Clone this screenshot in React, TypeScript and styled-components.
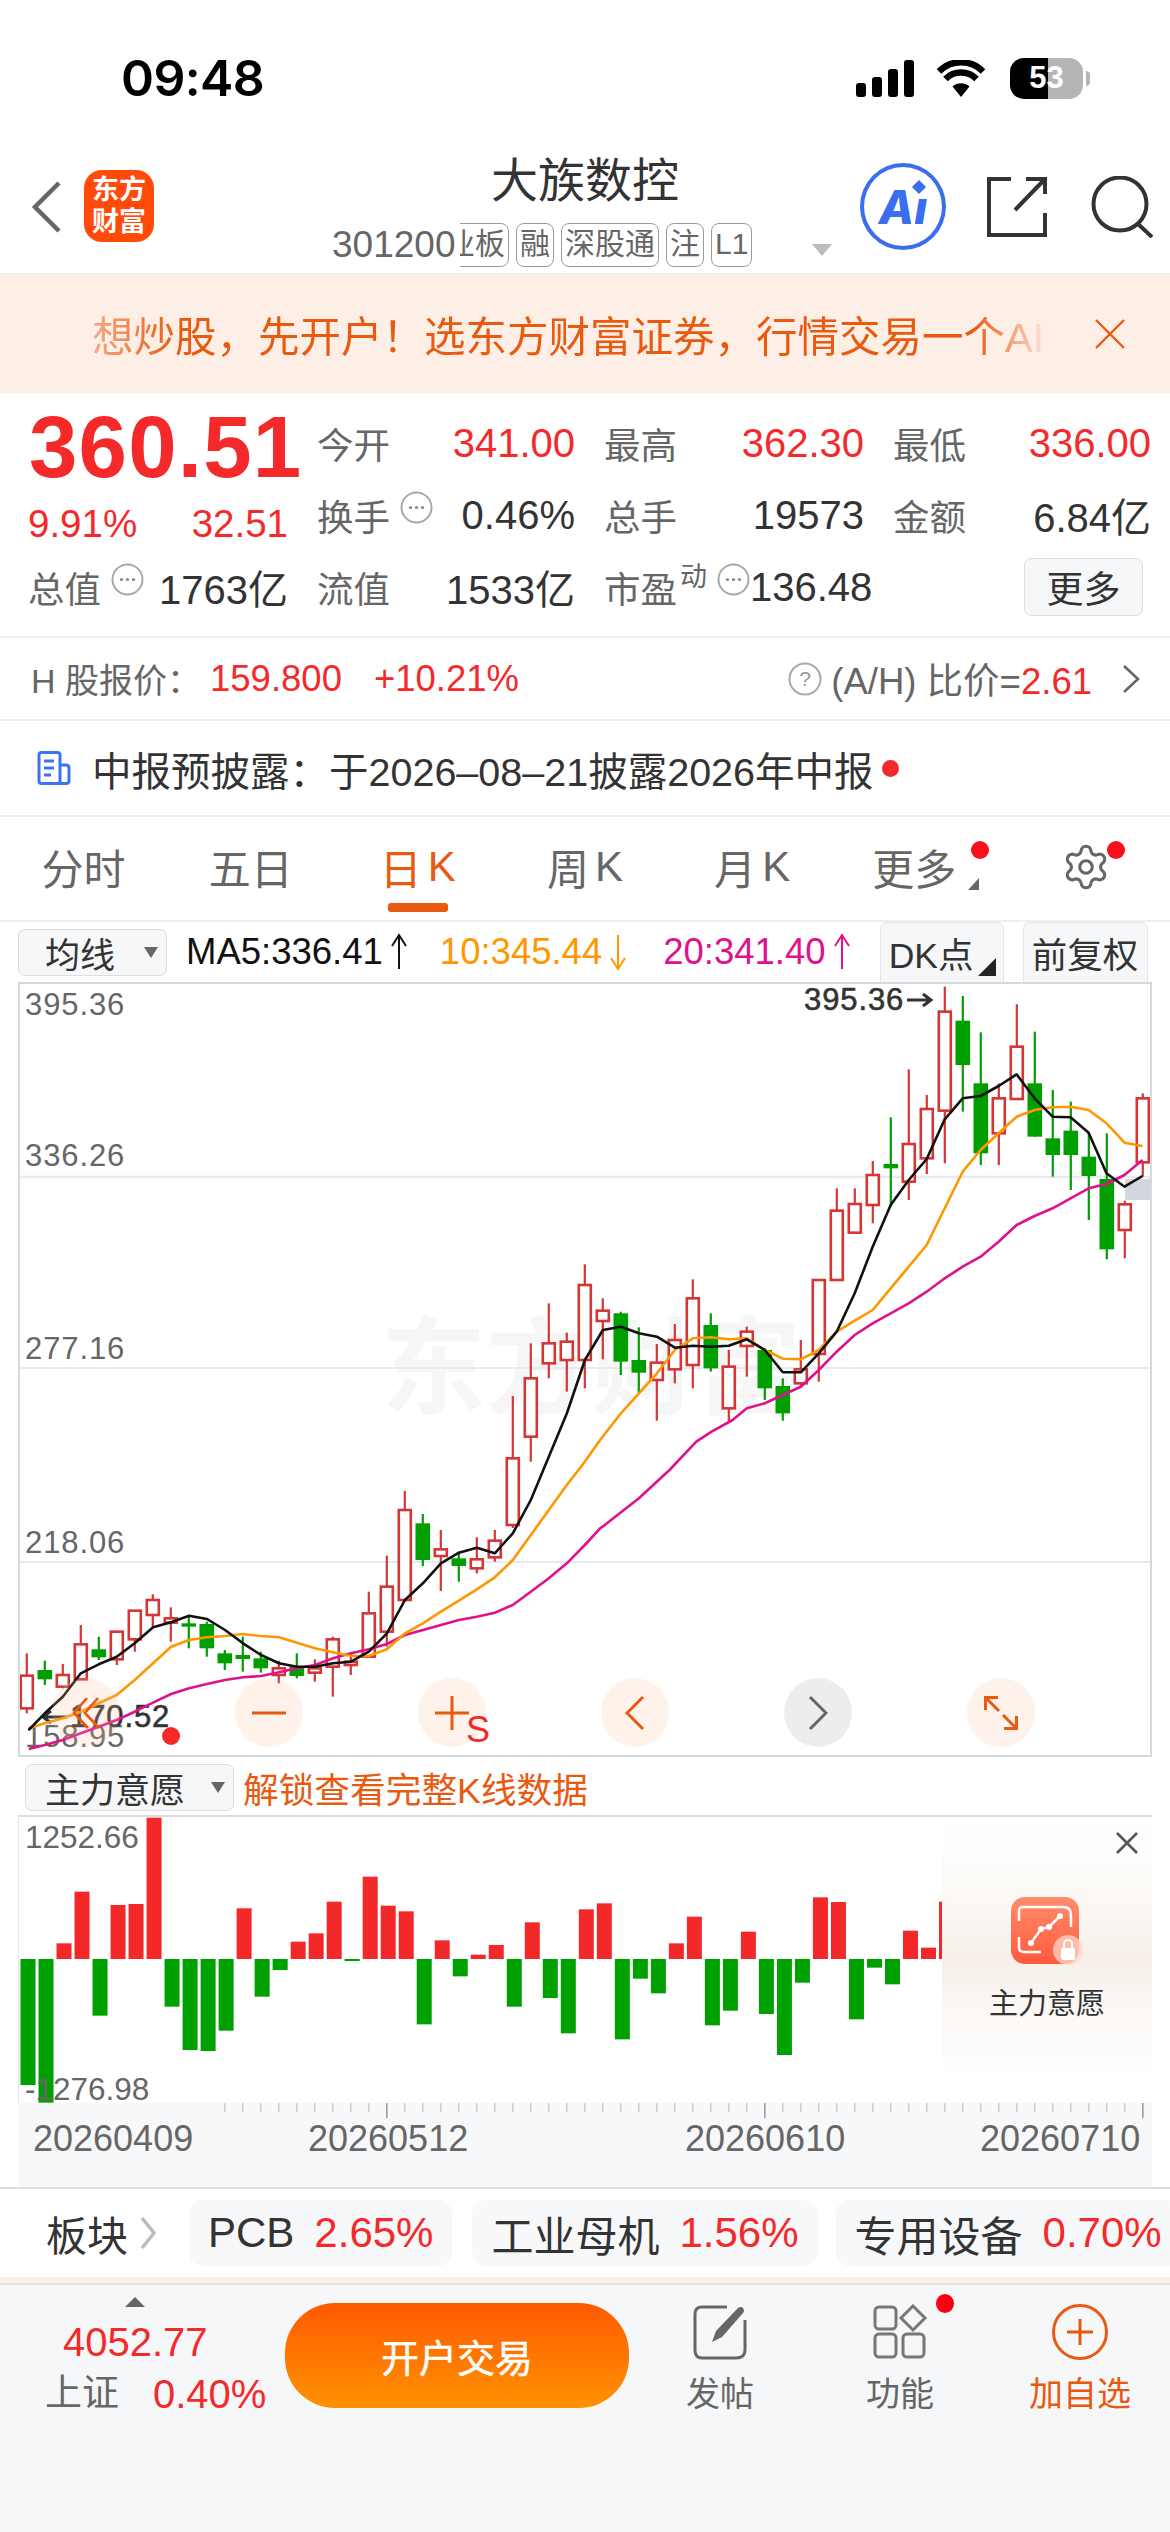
import React from "react";
import styled, { createGlobalStyle } from "styled-components";
import { Settings } from "lucide-react";

const FONT = `"Liberation Sans", "Noto Sans CJK SC", sans-serif`;
const RED = "#f42a2a";
const ORANGE = "#e85a10";
const GREY = "#666666";
const DARK = "#333333";

const Global = createGlobalStyle`
  html, body { margin: 0; padding: 0; background: #fff; }
  * { box-sizing: border-box; }
  body { font-family: ${FONT}; }
`;

const Page = styled.div`
  width: 1170px; height: 2532px; overflow: hidden; background: #fff;
  display: flex; flex-direction: column; font-family: ${FONT}; color: ${DARK};
`;

/* ---------- status bar ---------- */
const StatusBar = styled.div`
  height: 156px; display: flex; align-items: center; padding: 0 0 0 121px; flex-shrink: 0;
`;
const Clock = styled.div`
  font-family: Inter, ${FONT}; font-weight: 600; font-size: 50px; letter-spacing: -.6px; color: #000; width: 735px;
`;
const Signal = styled.div`
  display: flex; align-items: flex-end; gap: 6px; height: 37px; width: 80px;
`;
const SignalBar = styled.span<{ $h: number }>`
  width: 10px; height: ${(p) => p.$h}px; background: #000; border-radius: 3px;
`;
const Battery = styled.div`
  position: relative; width: 73px; height: 41px; margin-left: 24px; border-radius: 14px;
  background: linear-gradient(90deg, #000 0 38px, #b5b5b5 38px 100%);
  display: flex; align-items: center; justify-content: center;
  color: #fff; font-weight: 700; font-size: 31px;
  &::after {
    content: ""; position: absolute; right: -7px; top: 13px; width: 4px; height: 15px;
    border-radius: 0 4px 4px 0; background: #b5b5b5;
  }
`;

/* ---------- nav ---------- */
const Nav = styled.div`
  height: 119px; flex-shrink: 0; display: flex; align-items: flex-start; padding-left: 32px;
  border-bottom: 2px solid #eeeeee;
`;
const BackSvg = styled.svg`
  width: 30px; height: 52px; margin-top: 25px; flex-shrink: 0;
`;
const Logo = styled.div`
  width: 70px; height: 72px; margin: 14px 0 0 22px; border-radius: 18px; background: #ff4a0a;
  color: #fff; font-size: 27px; line-height: 32px; font-weight: 700; text-align: center;
  display: flex; align-items: center; justify-content: center; flex-shrink: 0;
`;
const NavCenter = styled.div`
  width: 506px; margin-left: 178px; flex-shrink: 0; display: flex; flex-direction: column;
`;
const Title = styled.div`
  font-size: 47px; line-height: 50px; text-align: center; color: ${DARK};
`;
const SubLine = styled.div`
  display: flex; align-items: center; height: 44px; margin-top: 17px; color: ${GREY};
`;
const Code = styled.div`
  font-size: 37px; width: 128px; flex-shrink: 0;
`;
const TagScroller = styled.div`
  width: 300px; overflow: hidden; display: flex; flex-shrink: 0;
`;
const TagTrack = styled.div`
  display: flex; gap: 7px; margin-left: -49px; flex-shrink: 0;
`;
const Tag = styled.span`
  height: 44px; padding: 0 3px; border: 1.5px solid #9a9a9a; border-radius: 8px;
  font-size: 30px; line-height: 40px; white-space: nowrap; color: ${GREY}; flex-shrink: 0;
`;
const CodeCaret = styled.span`
  margin: 10px 0 0 52px; width: 0; height: 0;
  border-left: 10px solid transparent; border-right: 10px solid transparent; border-top: 12px solid #bdbdbd;
`;
const AiBadge = styled.div`
  position: relative; width: 86px; height: 87px; margin: 7px 0 0 22px; flex-shrink: 0; border-radius: 50%;
  border: 4.5px solid #3a6df0; color: #3a6df0; display: flex; align-items: center; justify-content: center;
  font-family: Inter, ${FONT}; font-style: italic; font-weight: 800; font-size: 46px;
`;
const AiSpark = styled.span`
  position: absolute; left: 50px; top: 15px; width: 10px; height: 10px; background: #3a6df0; transform: rotate(45deg);
`;
const ShareSvg = styled.svg`
  width: 60px; height: 60px; margin: 21px 0 0 41px; flex-shrink: 0;
`;
const SearchSvg = styled.svg`
  width: 62px; height: 62px; margin: 20px 0 0 44px; flex-shrink: 0;
`;

/* ---------- banner ---------- */
const Banner = styled.div`
  height: 118px; flex-shrink: 0; background: #fdeee6; display: flex; align-items: center; padding-left: 92px; margin-top: 0;
`;
const BannerText = styled.div`
  width: 958px; overflow: hidden; white-space: nowrap; font-size: 41.5px; color: ${ORANGE};
  -webkit-mask-image: linear-gradient(90deg, rgba(0,0,0,.45) 0, #000 9%, #000 92%, transparent 100%);
  mask-image: linear-gradient(90deg, rgba(0,0,0,.45) 0, #000 9%, #000 92%, transparent 100%);
`;
const CloseSvg = styled.svg`
  width: 30px; height: 30px; margin-left: 45px; flex-shrink: 0;
`;

/* ---------- quote ---------- */
const Quote = styled.div`
  height: 245px; flex-shrink: 0; padding: 14px 0 0 28px; border-bottom: 2px solid #eeeeee;
  display: grid; grid-template-columns: 289px 287px 289px 258px; grid-auto-rows: 72px;
`;
const PriceBlock = styled.div`
  grid-row: span 2; display: flex; flex-direction: column;
`;
const BigPrice = styled.div`
  font-size: 87px; font-weight: 700; line-height: 80px; color: ${RED}; margin-left: 1px; letter-spacing: 1.2px;
`;
const PriceSub = styled.div`
  display: flex; justify-content: space-between; width: 260px; line-height: 74px; font-size: 38.5px; color: ${RED};
`;
const Cell = styled.div<{ $last?: boolean }>`
  display: flex; align-items: center; padding-right: ${(p) => (p.$last ? 0 : 29)}px;
`;
const CellLabel = styled.span`
  font-size: 36.5px; color: ${GREY}; white-space: nowrap;
`;
const CellValue = styled.span<{ $red?: boolean }>`
  margin-left: auto; font-size: 40px; letter-spacing: 0; color: ${(p) => (p.$red ? RED : DARK)}; white-space: nowrap;
`;
const InfoSvg = styled.svg`
  width: 33px; height: 33px; margin: -16px 0 0 10px; flex-shrink: 0;
`;
const SupText = styled.span`
  font-size: 27px; color: ${GREY}; margin: -26px 0 0 3px;
`;
const MoreBtn = styled.div`
  margin-left: auto; margin-right: 8px; width: 119px; height: 58px; background: #f6f7f9;
  border: 1.5px solid #dcdde0; border-radius: 7px; display: flex; align-items: center; justify-content: center;
  font-size: 37px; color: ${DARK};
`;

/* ---------- H row ---------- */
const HRow = styled.div`
  height: 83px; flex-shrink: 0; display: flex; align-items: center; padding: 0 30px 0 31px;
  border-bottom: 2px solid #eeeeee; font-size: 34px; color: ${GREY};
`;
const HNum = styled.span<{ $ml: number }>`
  font-size: 36.5px; color: ${RED}; margin-left: ${(p) => p.$ml}px;
`;
const HelpSvg = styled.svg`
  width: 34px; height: 34px; margin-left: auto; margin-right: 9px; flex-shrink: 0;
`;
const ChevronSvg = styled.svg`
  width: 18px; height: 28px; margin-left: 30px; flex-shrink: 0;
`;
const HRatio = styled.span`
  font-size: 36.5px; color: ${GREY}; white-space: nowrap;
`;
const RedSpan = styled.span`
  color: ${RED};
`;

/* ---------- notice ---------- */
const Notice = styled.div`
  height: 96px; flex-shrink: 0; display: flex; align-items: center; padding-left: 37px;
  border-bottom: 2px solid #eeeeee;
`;
const NoticeSvg = styled.svg`
  width: 34px; height: 34px; flex-shrink: 0;
`;
const NoticeText = styled.span`
  margin-left: 21px; font-size: 39.5px; color: ${DARK}; white-space: nowrap;
`;
const NoticeDot = styled.span`
  margin-left: 8px; width: 17px; height: 17px; border-radius: 50%; background: ${RED}; flex-shrink: 0;
`;

/* ---------- tabs ---------- */
const Tabs = styled.div`
  height: 105px; flex-shrink: 0; display: grid; grid-template-columns: repeat(7, 1fr);
  border-bottom: 2px solid #eeeeee; padding-bottom: 4px;
`;
const Tab = styled.div<{ $active?: boolean; $shift?: number }>`
  position: relative; display: flex; align-items: center; justify-content: center;
  font-size: 42px; white-space: nowrap; color: ${(p) => (p.$active ? ORANGE : GREY)};
  padding-right: ${(p) => p.$shift || 0}px;
`;
const TabK = styled.span`
  margin-left: 6px;
`;
const TabBar = styled.span`
  position: absolute; left: 50%; bottom: 4px; margin-left: -30px; width: 60px; height: 9px; border-radius: 3px; background: ${ORANGE};
`;
const TabDot = styled.span<{ $right: number }>`
  position: absolute; top: 24px; right: ${(p) => p.$right}px; width: 18px; height: 18px; border-radius: 50%; background: #fb0f1a;
`;
const TabCorner = styled.span`
  position: absolute; right: 24px; top: 61px; width: 0; height: 0;
  border-left: 11px solid transparent; border-bottom: 12px solid ${GREY};
`;

/* ---------- MA row ---------- */
const MaRow = styled.div`
  height: 60px; flex-shrink: 0; display: flex; align-items: center; padding-left: 18px;
`;
const Select = styled.div<{ $w: number; $pad: number }>`
  position: relative; width: ${(p) => p.$w}px; height: 47px; flex-shrink: 0; background: #f6f7f9;
  border: 1.5px solid #dcdde0; border-radius: 7px; font-size: 35px; color: ${DARK};
  display: flex; align-items: center; padding-left: ${(p) => p.$pad}px;
  &::after {
    content: ""; position: absolute; right: 8px; top: 17px; width: 0; height: 0;
    border-left: 7px solid transparent; border-right: 7px solid transparent; border-top: 11px solid ${GREY};
  }
`;
const MaText = styled.span<{ $c: string; $ml: number }>`
  display: flex; align-items: center; font-size: 36.5px; color: ${(p) => p.$c}; margin-left: ${(p) => p.$ml}px; white-space: nowrap;
`;
const MaArrowSvg = styled.svg`
  width: 20px; height: 40px; margin-left: 6px; flex-shrink: 0;
`;
const OptBtn = styled.div<{ $ml: number; $w: number; $corner?: boolean }>`
  position: relative; height: 60px; width: ${(p) => p.$w}px; margin-left: ${(p) => p.$ml}px; flex-shrink: 0;
  background: #f6f7f9; border: 1.5px solid #e4e5e9; border-bottom: none; border-radius: 7px 7px 0 0;
  font-size: 35.5px; color: ${DARK}; display: flex; align-items: center; padding-left: 8px; white-space: nowrap;
  ${(p) =>
    p.$corner
      ? `&::after { content: ""; position: absolute; right: 7px; bottom: 6px; width: 0; height: 0;
         border-left: 18px solid transparent; border-bottom: 18px solid #222; }`
      : ""}
`;

/* ---------- main chart ---------- */
const ChartFrame = styled.div`
  position: relative; width: 1134px; height: 775px; margin-left: 18px; flex-shrink: 0; border: 2px solid #d8d9dd;
`;
const ChartSvg = styled.svg`
  position: absolute; left: 0; top: 0; width: 1130px; height: 771px; display: block;
`;
const AxisLabel = styled.span<{ $top: number }>`
  position: absolute; left: 5px; top: ${(p) => p.$top}px; font-size: 31px; line-height: 34px; letter-spacing: .9px; color: ${GREY};
`;
const HighLabel = styled.span`
  position: absolute; left: 784px; top: -2px; display: flex; align-items: center; font-size: 31px; line-height: 36px;
  letter-spacing: .9px; color: ${DARK}; white-space: nowrap; -webkit-text-stroke: .6px ${DARK};
`;
const LowLabel = styled.span`
  position: absolute; left: 18px; top: 716px; display: flex; align-items: center; font-size: 31px; line-height: 34px;
  letter-spacing: .9px; color: ${DARK}; white-space: nowrap; -webkit-text-stroke: .6px ${DARK};
`;
const HArrowSvg = styled.svg`
  width: 28px; height: 16px; flex-shrink: 0; margin: 0 2px;
`;
const LowDot = styled.span`
  position: absolute; left: 142px; top: 743px; width: 18px; height: 18px; border-radius: 50%; background: ${RED};
`;
const CtrlRow = styled.div`
  position: absolute; left: 32px; bottom: 8px; display: flex; gap: 115px;
`;
const Ctrl = styled.div<{ $grey?: boolean }>`
  position: relative; width: 68px; height: 69px; border-radius: 50%;
  background: ${(p) => (p.$grey ? "rgba(0,0,0,.07)" : "rgba(250,190,150,.2)")}; display: flex; align-items: center; justify-content: center;
`;
const CtrlS = styled.span`
  position: absolute; left: 48px; top: 35px; font-size: 36px; line-height: 34px; color: ${RED};
`;

/* ---------- indicator row ---------- */
const SubRow = styled.div`
  height: 58px; flex-shrink: 0; display: flex; align-items: center; padding: 2px 0 0 25px;
`;
const Unlock = styled.span`
  margin-left: 9px; font-size: 35.7px; color: ${ORANGE}; white-space: nowrap;
`;
const SubFrame = styled.div`
  position: relative; width: 1134px; height: 288px; margin-left: 18px; flex-shrink: 0;
  border-top: 2px solid #dcdde0; border-left: 1px solid #e4e5e8; overflow: hidden;
`;
const SubSvg = styled.svg`
  position: absolute; left: 0; top: 0; width: 1133px; height: 286px; display: block;
`;
const SubLabel = styled.span<{ $top: number }>`
  position: absolute; left: 6px; top: ${(p) => p.$top}px; font-size: 31.5px; line-height: 34px; color: ${GREY};
`;
const UpsellPanel = styled.div`
  position: absolute; right: 0; top: 0; bottom: 0; width: 210px; display: flex; flex-direction: column; align-items: center;
  background: linear-gradient(180deg, #ffffff 0%, #fdfbf9 22%, #f6efe9 50%, #fbf8f6 68%, #ffffff 92%);
`;
const UpsellClose = styled.svg`
  position: absolute; right: 14px; top: 15px; width: 22px; height: 22px;
`;
const UpsellIcon = styled.svg`
  width: 72px; height: 69px; margin-top: 80px;
`;
const UpsellText = styled.div`
  margin-top: 20px; font-size: 29px; line-height: 36px; color: ${DARK}; white-space: nowrap;
`;
const AxisBand = styled.div`
  position: relative; width: 1134px; height: 84px; margin-left: 18px; flex-shrink: 0; background: #f7f8fa;
`;
const TickSvg = styled.svg`
  position: absolute; left: 0; top: 0; width: 1134px; height: 18px; display: block;
`;
const DateLabel = styled.span<{ $left: number }>`
  position: absolute; left: ${(p) => p.$left}px; top: 16px; font-size: 36px; line-height: 40px; color: ${GREY};
`;

/* ---------- sector row ---------- */
const SectorRow = styled.div`
  height: 90px; flex-shrink: 0; display: flex; align-items: center; padding-left: 46px; overflow: hidden;
  border-top: 2px solid #dcdde0;
`;
const SectorTitle = styled.span`
  font-size: 41px; color: ${DARK}; white-space: nowrap; flex-shrink: 0;
`;
const SectorChevron = styled.svg`
  width: 18px; height: 34px; margin-left: 11px; flex-shrink: 0;
`;
const Chip = styled.div<{ $ml: number }>`
  height: 66px; margin-left: ${(p) => p.$ml}px; flex-shrink: 0; display: flex; align-items: center; gap: 20px;
  padding: 0 19px; background: #f7f8fa; border-radius: 14px; font-size: 42px; color: ${DARK}; white-space: nowrap;
`;
const Strip = styled.div`
  height: 6px; flex-shrink: 0; background: #fdeee6;
`;

/* ---------- footer ---------- */
const Footer = styled.div`
  flex: 1; background: #f6f7f9; border-top: 2px solid #e5e5e5; display: flex; align-items: flex-start;
`;
const IndexBlock = styled.div`
  width: 285px; flex-shrink: 0; display: flex; flex-direction: column; padding-left: 45px;
`;
const IndexCaret = styled.span`
  width: 0; height: 0; margin: 12px 0 0 80px;
  border-left: 10px solid transparent; border-right: 10px solid transparent; border-bottom: 10px solid ${GREY};
`;
const IndexValue = styled.div`
  margin: 15px 0 0 18px; font-size: 40px; line-height: 40px; color: ${RED};
`;
const IndexRow = styled.div`
  margin-top: 12px; display: flex; gap: 34px; font-size: 37px; line-height: 40px; color: ${GREY}; white-space: nowrap;
`;
const IndexPct = styled.span`
  font-size: 40px; color: ${RED};
`;
const TradeBtn = styled.div`
  width: 344px; height: 105px; margin-top: 18px; flex-shrink: 0; border-radius: 50px;
  background: linear-gradient(180deg, #ff5a00, #ff9200); color: #fff; font-size: 38px; font-weight: 400;
  display: flex; align-items: center; justify-content: center; -webkit-text-stroke: .5px #fff;
`;
const Actions = styled.div`
  flex: 1; display: grid; grid-template-columns: repeat(3, 180px); margin-left: 1px;
`;
const Action = styled.div<{ $active?: boolean }>`
  position: relative; display: flex; flex-direction: column; align-items: center; padding-top: 19px;
  color: ${(p) => (p.$active ? ORANGE : GREY)}; font-size: 34px;
`;
const ActionSvg = styled.svg`
  width: 56px; height: 56px; display: block;
`;
const ActionLabel = styled.span`
  margin-top: 14px; line-height: 40px; white-space: nowrap;
`;
const ActionDot = styled.span`
  position: absolute; left: 126px; top: 9px; width: 18px; height: 19px; border-radius: 50%; background: #fb0010;
`;

/* ---------- data ---------- */
const X = (i: number) => 26.8 + 18 * i;
const Z5 = 1420, Z3 = 960;
type C = [number, number, number, number, number];
const early: C[] = [
  [700,767,865,880,1],[722,750,778,795,0],[732,765,800,805,1],[615,673,778,780,1],[650,688,712,720,0],
  [632,635,718,735,1],[570,572,658,695,1],[523,540,585,620,1],[562,595,608,665,1],[585,610,620,685,0],
  [605,612,685,710,0],[690,700,730,750,0],[650,705,717,755,0],[695,715,745,758,0],[722,745,765,790,1],
  [700,738,768,775,0],[718,745,758,785,1],[650,658,740,830,1],[700,725,735,765,1],[515,580,710,710,1],
  [407,500,635,680,1],[213,270,540,545,1],[282,310,420,438,0],[330,388,408,513,1],[395,415,438,485,0],
  [352,418,445,460,1],[330,362,412,425,1],
];
const late: C[] = [
  [1308,1495,1695,1704,1],[1150,1255,1430,1505,1],[1030,1150,1210,1255,1],[1118,1145,1200,1295,1],
  [913,975,1200,1285,1],[1015,1052,1083,1198,1],[1055,1060,1205,1245,0],[1102,1200,1238,1300,0],
  [1152,1208,1260,1382,1],[1092,1140,1228,1270,1],[958,1015,1215,1285,1],[1060,1095,1225,1235,0],
  [1170,1220,1345,1385,1],[1100,1115,1158,1250,1],[1165,1170,1285,1320,0],[1255,1278,1360,1382,0],
  [1140,1228,1270,1280,1],[958,960,1182,1265,1],[685,752,960,960,1],[685,732,818,820,1],[603,645,735,790,1],
  [472,612,625,740,0],[328,552,665,720,1],[405,447,595,642,1],[80,155,452,610,1],[108,182,315,455,0],
  [217,370,580,615,0],[370,415,520,615,1],[133,260,417,417,1],[215,370,530,530,0],[390,535,585,650,0],
  [425,512,585,690,0],[520,590,648,780,0],[520,657,868,898,0],[722,733,810,895,1],[400,415,607,650,1],
];
const candles = [
  ...early.map((c) => c.slice(0, 4).map((v) => Z5 + v / 3).concat(c[4])),
  ...late.map((c) => c.slice(0, 4).map((v) => Z3 + v / 3).concat(c[4])),
];

const z5 = (a: number[]) => {
  const o: number[][] = [];
  for (let i = 0; i < a.length; i += 2) o.push([a[i] / 2.613, 1420 + a[i + 1] / 3]);
  return o;
};
const z4 = (a: number[]) => {
  const o: number[][] = [];
  for (let i = 0; i < a.length; i += 2) o.push([570 + a[i] / 2.613, 960 + a[i + 1] / 3]);
  return o;
};
const z6 = (a: number[]) => {
  const o: number[][] = [];
  for (let i = 0; i < a.length; i += 2) o.push([570 + a[i] / 2.613, 1420 + a[i + 1] / 3]);
  return o;
};
const pts = (p: number[][]) => p.map((q) => `${q[0].toFixed(1)},${q[1].toFixed(1)}`).join(" ");

const black = [
  ...z5([75,930,117,880,164,830,211,760,258,733,305,710,352,670,400,622,447,607,494,587,541,597,588,630,635,670,682,705,729,730,776,740,823,740,870,730,917,725,964,695,1011,640,1058,540,1105,490,1152,430,1199,398,1246,383,1293,400,1340,340,1387,240,1434,110]),
  [567, 1413],
  ...z4([39,1200,86,1110,133,1100,180,1120,227,1130,274,1163,321,1157,368,1160,415,1157,462,1138,509,1170,556,1237,603,1237,650,1180,697,1115,744,1000,791,860,838,735,885,660,932,597,979,478,1026,415,1073,408,1120,378,1167,343,1214,415,1261,470,1308,472,1355,518,1402,640,1449,680,1496,648]),
];
const orange = [
  ...z5([75,925,117,910,164,895,211,875,258,850,305,825,352,780,400,730,447,680,494,660,541,652,588,648,635,642,682,648,729,652,776,668,823,685,870,697,917,708,964,708,1011,688,1058,640,1105,610,1152,575,1199,542,1246,508,1293,472,1340,420,1387,345,1434,270,1481,195,1528,125,1568,60]),
  ...z4([133,1360,180,1300,227,1240,274,1170,321,1135,368,1132,415,1138,462,1135,509,1170,556,1196,603,1198,650,1170,697,1115,744,1082,791,1050,838,985,885,920,932,855,979,745,1026,635,1073,570,1120,520,1167,470,1214,450,1261,442,1308,440,1355,450,1402,490,1449,548,1496,558]),
];
const magenta = [
  ...z5([75,987,117,975,164,960,211,940,258,920,305,900,352,875,400,848,447,822,494,805,541,792,588,780,635,772,682,768,729,757,776,745,823,735,870,715,917,700,964,688,1011,672,1058,645,1105,630,1152,615,1199,600,1246,590,1293,578,1340,555,1387,515,1434,475,1481,430,1528,375,1568,325]),
  ...z6([85,320,180,235,260,150,330,65,370,35,425,0]),
  ...z4([462,1345,509,1330,556,1305,603,1280,650,1230,697,1175,744,1125,791,1090,838,1060,885,1030,932,995,979,955,1026,920,1073,890,1120,845,1167,795,1214,768,1261,745,1308,715,1355,685,1402,672,1449,645,1496,600]),
];

const bars: number[] = [915,968,490,335,707,375,372,113,680,810,813,752,385,650,570,485,460,365,543,290,377,394,733,481,589,524,495,680,427,654,760,388,370,778,596,640,490,410,736,692,455,702,825,608,352,366,718,563,613,452,503,365];
const ZERO = 537;

const Up = "#d63535";
const Dn = "#009e00";

const PriceChart = () => (
  <ChartSvg viewBox="20 984 1130 771">
    <text x={381} y={1405} fontSize={105} fontWeight={700} fill="#f6f6f6" fontFamily={FONT}>东方财富</text>
    {[1177, 1368, 1562].map((y) => (
      <line key={y} x1={20} x2={1150} y1={y} y2={y} stroke="#e8eaf1" strokeWidth={y === 1177 ? 2.5 : 2} />
    ))}
    <rect x={1125} y={1179} width={25} height={21} fill="#d3d6dc" />
    {candles.map((c, i) => {
      const x = X(i);
      const col = c[4] ? Up : Dn;
      return (
        <g key={i}>
          <line x1={x} x2={x} y1={c[0]} y2={c[3]} stroke={col} strokeWidth={2.2} />
          {c[4] ? (
            <rect x={x - 6} y={c[1]} width={12} height={c[2] - c[1]} fill="#fff" stroke={col} strokeWidth={2.6} />
          ) : (
            <rect x={x - 7.3} y={c[1]} width={14.6} height={c[2] - c[1]} fill={col} />
          )}
        </g>
      );
    })}
    <polyline points={pts(magenta)} fill="none" stroke="#df128c" strokeWidth={2.6} strokeLinejoin="round" />
    <polyline points={pts(orange)} fill="none" stroke="#ff9800" strokeWidth={2.6} strokeLinejoin="round" />
    <polyline points={pts(black)} fill="none" stroke="#111" strokeWidth={2.6} strokeLinejoin="round" />
  </ChartSvg>
);

const SubChart = () => (
  <SubSvg viewBox="18 1817 1133 286">
    {bars.map((v, i) => {
      const x = 27 + 18.01 * i - 7.5;
      const up = v < ZERO;
      const y = 1780 + Math.min(v, ZERO) / 3;
      const h = Math.abs(v - ZERO) / 3;
      return <rect key={i} x={x} y={y} width={15} height={h} fill={up ? "#f32828" : "#00a000"} />;
    })}
  </SubSvg>
);

const Ticks = () => (
  <TickSvg viewBox="18 2103 1134 18">
    {Array.from({ length: 52 }).map((_, k) => {
      const i = k + 11;
      const major = i === 20 || i === 41 || i === 62;
      return (
        <line key={i} x1={X(i)} x2={X(i)} y1={2103} y2={major ? 2118 : 2112} stroke={major ? "#9c9c9c" : "#cfcfcf"} strokeWidth={1.6} />
      );
    })}
  </TickSvg>
);

const Info = () => (
  <InfoSvg viewBox="0 0 33 33">
    <circle cx={16.5} cy={16.5} r={15} fill="none" stroke="#a8a8a8" strokeWidth={2} />
    <circle cx={10.5} cy={16.5} r={1.6} fill="#888" />
    <circle cx={16.5} cy={16.5} r={1.6} fill="#888" />
    <circle cx={22.5} cy={16.5} r={1.6} fill="#888" />
  </InfoSvg>
);

const MaArrow = ({ c, down }: { c: string; down?: boolean }) => (
  <MaArrowSvg viewBox="0 0 20 40">
    {down ? (
      <path d="M10 3 V36 M3 26 L10 37 L17 26" fill="none" stroke={c} strokeWidth={2} />
    ) : (
      <path d="M10 37 V4 M3 14 L10 3 L17 14" fill="none" stroke={c} strokeWidth={2} />
    )}
  </MaArrowSvg>
);

const HArrow = ({ left }: { left?: boolean }) => (
  <HArrowSvg viewBox="0 0 28 16">
    {left ? (
      <path d="M27 8 H3 M11 2 L3 8 L11 14" fill="none" stroke="#333" strokeWidth={3} />
    ) : (
      <path d="M1 8 H25 M17 2 L25 8 L17 14" fill="none" stroke="#333" strokeWidth={3} />
    )}
  </HArrowSvg>
);

export default function App() {
  return (
    <Page>
      <Global />
      <StatusBar>
        <Clock>09:48</Clock>
        <Signal>
          <SignalBar $h={14} />
          <SignalBar $h={20} />
          <SignalBar $h={28} />
          <SignalBar $h={37} />
        </Signal>
        <svg width="50" height="37" viewBox="0 0 50 37">
          <path d="M25 37 L16.5 26.5 A13 13 0 0 1 33.5 26.5 Z" fill="#000" />
          <path d="M9.5 19 A22 22 0 0 1 40.5 19" fill="none" stroke="#000" strokeWidth={6.5} />
          <path d="M3 11.5 A31 31 0 0 1 47 11.5" fill="none" stroke="#000" strokeWidth={6.5} />
        </svg>
        <Battery>53</Battery>
      </StatusBar>

      <Nav>
        <BackSvg viewBox="0 0 30 52">
          <path d="M27 2 L3 26 L27 50" fill="none" stroke="#666" strokeWidth={4.5} />
        </BackSvg>
        <Logo>
          东方
          <br />
          财富
        </Logo>
        <NavCenter>
          <Title>大族数控</Title>
          <SubLine>
            <Code>301200</Code>
            <TagScroller>
              <TagTrack>
                <Tag>创业板</Tag>
                <Tag>融</Tag>
                <Tag>深股通</Tag>
                <Tag>注</Tag>
                <Tag>L1</Tag>
              </TagTrack>
            </TagScroller>
            <CodeCaret />
          </SubLine>
        </NavCenter>
        <AiBadge>
          Aı
          <AiSpark />
        </AiBadge>
        <ShareSvg viewBox="0 0 60 60">
          <path d="M24 2 H2 V58 H58 V36 M28 33 L58 2 M39 2 H58 V17" fill="none" stroke="#333" strokeWidth={4} />
        </ShareSvg>
        <SearchSvg viewBox="0 0 62 62">
          <circle cx={29} cy={28} r={26.5} fill="none" stroke="#333" strokeWidth={4} />
          <line x1={47} y1={48} x2={61} y2={61} stroke="#333" strokeWidth={4} />
        </SearchSvg>
      </Nav>

      <Banner>
        <BannerText>想炒股，先开户！选东方财富证券，行情交易一个AI</BannerText>
        <CloseSvg viewBox="0 0 30 30">
          <path d="M1 1 L29 29 M29 1 L1 29" fill="none" stroke={ORANGE} strokeWidth={2.4} />
        </CloseSvg>
      </Banner>

      <Quote>
        <PriceBlock>
          <BigPrice>360.51</BigPrice>
          <PriceSub>
            <span>9.91%</span>
            <span>32.51</span>
          </PriceSub>
        </PriceBlock>
        <Cell>
          <CellLabel>今开</CellLabel>
          <CellValue $red>341.00</CellValue>
        </Cell>
        <Cell>
          <CellLabel>最高</CellLabel>
          <CellValue $red>362.30</CellValue>
        </Cell>
        <Cell $last>
          <CellLabel>最低</CellLabel>
          <CellValue $red>336.00</CellValue>
        </Cell>
        <Cell>
          <CellLabel>换手</CellLabel>
          <Info />
          <CellValue>0.46%</CellValue>
        </Cell>
        <Cell>
          <CellLabel>总手</CellLabel>
          <CellValue>19573</CellValue>
        </Cell>
        <Cell $last>
          <CellLabel>金额</CellLabel>
          <CellValue>6.84亿</CellValue>
        </Cell>
        <Cell>
          <CellLabel>总值</CellLabel>
          <Info />
          <CellValue>1763亿</CellValue>
        </Cell>
        <Cell>
          <CellLabel>流值</CellLabel>
          <CellValue>1533亿</CellValue>
        </Cell>
        <Cell>
          <CellLabel>市盈</CellLabel>
          <SupText>动</SupText>
          <Info />
          <CellValue>136.48</CellValue>
        </Cell>
        <Cell $last>
          <MoreBtn>更多</MoreBtn>
        </Cell>
      </Quote>

      <HRow>
        H 股报价：
        <HNum $ml={9}>159.800</HNum>
        <HNum $ml={32}>+10.21%</HNum>
        <HelpSvg viewBox="0 0 34 34">
          <circle cx={17} cy={17} r={15.5} fill="none" stroke="#aaa" strokeWidth={2} />
          <text x={17} y={24} textAnchor="middle" fontSize={21} fill="#999" fontFamily={FONT}>?</text>
        </HelpSvg>
        <HRatio>
          (A/H) 比价=<RedSpan>2.61</RedSpan>
        </HRatio>
        <ChevronSvg viewBox="0 0 18 28">
          <path d="M2 1 L16 14 L2 27" fill="none" stroke="#666" strokeWidth={2.6} />
        </ChevronSvg>
      </HRow>

      <Notice>
        <NoticeSvg viewBox="0 0 34 34">
          <path d="M2 4 Q2 1.5 4.5 1.5 H20 Q23 1.5 23 4 V32.5 H4.5 Q2 32.5 2 30 Z" fill="none" stroke="#3b74f0" strokeWidth={3} />
          <path d="M23 14 H29 Q32 14 32 17 V30 Q32 32.5 29 32.5 H23" fill="none" stroke="#3b74f0" strokeWidth={3} />
          <path d="M7 10 H17 M7 17 H17 M7 24 H14" fill="none" stroke="#3b74f0" strokeWidth={3} />
        </NoticeSvg>
        <NoticeText>中报预披露：于2026–08–21披露2026年中报</NoticeText>
        <NoticeDot />
      </Notice>

      <Tabs>
        <Tab>分时</Tab>
        <Tab>五日</Tab>
        <Tab $active>
          日<TabK>K</TabK>
          <TabBar />
        </Tab>
        <Tab>周<TabK>K</TabK></Tab>
        <Tab>月<TabK>K</TabK></Tab>
        <Tab $shift={10}>
          更多
          <TabDot $right={14} />
          <TabCorner />
        </Tab>
        <Tab>
          <Settings size={50} strokeWidth={1.5} color="#666" />
          <TabDot $right={45} />
        </Tab>
      </Tabs>

      <MaRow>
        <Select $w={149} $pad={26}>均线</Select>
        <MaText $c="#111" $ml={19}>MA5:336.41<MaArrow c="#111" /></MaText>
        <MaText $c="#ff9800" $ml={31}>10:345.44<MaArrow c="#ff9800" down /></MaText>
        <MaText $c="#df128c" $ml={35}>20:341.40<MaArrow c="#df128c" /></MaText>
        <OptBtn $ml={28} $w={124} $corner>DK点</OptBtn>
        <OptBtn $ml={19} $w={125}>前复权</OptBtn>
      </MaRow>

      <ChartFrame>
        <AxisLabel $top={4}>395.36</AxisLabel>
        <AxisLabel $top={155}>336.26</AxisLabel>
        <AxisLabel $top={348}>277.16</AxisLabel>
        <AxisLabel $top={542}>218.06</AxisLabel>
        <AxisLabel $top={736}>158.95</AxisLabel>
        <HighLabel>395.36<HArrow /></HighLabel>
        <LowLabel><HArrow left />170.52</LowLabel>
        <LowDot />
        <PriceChart />
        <CtrlRow>
          <Ctrl>
            <svg width="30" height="34" viewBox="0 0 30 34">
              <path d="M16 2 L3 17 L17 32 M27 2 L14 17 L28 32" fill="none" stroke={ORANGE} strokeWidth={2.6} />
            </svg>
          </Ctrl>
          <Ctrl>
            <svg width="34" height="6" viewBox="0 0 34 6">
              <line x1={0} x2={34} y1={3} y2={3} stroke={ORANGE} strokeWidth={3} />
            </svg>
          </Ctrl>
          <Ctrl>
            <svg width="34" height="34" viewBox="0 0 34 34">
              <path d="M0 17 H34 M17 0 V34" fill="none" stroke={ORANGE} strokeWidth={3} />
            </svg>
            <CtrlS>S</CtrlS>
          </Ctrl>
          <Ctrl>
            <svg width="20" height="36" viewBox="0 0 20 36">
              <path d="M18 2 L2 18 L18 34" fill="none" stroke={ORANGE} strokeWidth={3} />
            </svg>
          </Ctrl>
          <Ctrl $grey>
            <svg width="20" height="36" viewBox="0 0 20 36">
              <path d="M2 2 L18 18 L2 34" fill="none" stroke="#666" strokeWidth={3} />
            </svg>
          </Ctrl>
          <Ctrl>
            <svg width="34" height="34" viewBox="0 0 34 34">
              <path d="M1.5 14 V1.5 H14 M1.5 1.5 L15 15 M32.5 20 V32.5 H20 M32.5 32.5 L19 19" fill="none" stroke={ORANGE} strokeWidth={3} />
            </svg>
          </Ctrl>
        </CtrlRow>
      </ChartFrame>

      <SubRow>
        <Select $w={209} $pad={19}>主力意愿</Select>
        <Unlock>解锁查看完整K线数据</Unlock>
      </SubRow>

      <SubFrame>
        <SubChart />
        <SubLabel $top={3}>1252.66</SubLabel>
        <SubLabel $top={255}>-1276.98</SubLabel>
        <UpsellPanel>
          <UpsellClose viewBox="0 0 22 22">
            <path d="M1 1 L21 21 M21 1 L1 21" fill="none" stroke="#555" strokeWidth={2.6} />
          </UpsellClose>
          <UpsellIcon viewBox="0 0 72 69">
            <defs>
              <linearGradient id="upsell" x1="0" y1="0" x2="0" y2="1">
                <stop offset="0" stopColor="#ff8d6c" />
                <stop offset="1" stopColor="#ff5a3c" />
              </linearGradient>
            </defs>
            <rect x={0} y={0} width={68} height={67} rx={14} fill="url(#upsell)" />
            <path d="M8 24 V14 Q8 10 12 10 H52 Q60 10 60 18 V30 M8 40 V50 Q8 55 13 55 H30" fill="none" stroke="#fff" strokeWidth={2.5} />
            <path d="M20 46 L30 32 L38 30 L49 19" fill="none" stroke="#fff" strokeWidth={2.5} />
            <circle cx={20} cy={46} r={3} fill="#fff" />
            <circle cx={30} cy={32} r={3} fill="#fff" />
            <circle cx={38} cy={30} r={3} fill="#fff" />
            <circle cx={49} cy={19} r={3} fill="#fff" />
            <circle cx={57} cy={53} r={15} fill="#ffd8cc" fillOpacity={0.75} />
            <rect x={50} y={51} width={14} height={12} rx={2} fill="#fff" />
            <path d="M53 51 V47 A4 4 0 0 1 61 47 V51" fill="none" stroke="#fff" strokeWidth={2} />
          </UpsellIcon>
          <UpsellText>主力意愿</UpsellText>
        </UpsellPanel>
      </SubFrame>

      <AxisBand>
        <Ticks />
        <DateLabel $left={15}>20260409</DateLabel>
        <DateLabel $left={290}>20260512</DateLabel>
        <DateLabel $left={667}>20260610</DateLabel>
        <DateLabel $left={962}>20260710</DateLabel>
      </AxisBand>

      <SectorRow>
        <SectorTitle>板块</SectorTitle>
        <SectorChevron viewBox="0 0 18 34">
          <path d="M3 2 L15 17 L3 32" fill="none" stroke="#bbb" strokeWidth={3.4} />
        </SectorChevron>
        <Chip $ml={32}>
          PCB<RedSpan>2.65%</RedSpan>
        </Chip>
        <Chip $ml={20}>
          工业母机<RedSpan>1.56%</RedSpan>
        </Chip>
        <Chip $ml={18}>
          专用设备<RedSpan>0.70%</RedSpan>
        </Chip>
      </SectorRow>
      <Strip />

      <Footer>
        <IndexBlock>
          <IndexCaret />
          <IndexValue>4052.77</IndexValue>
          <IndexRow>
            <span>上证</span>
            <IndexPct>0.40%</IndexPct>
          </IndexRow>
        </IndexBlock>
        <TradeBtn>开户交易</TradeBtn>
        <Actions>
          <Action>
            <ActionSvg viewBox="0 0 56 56">
              <path d="M35 3 H10 Q3 3 3 10 V46 Q3 54 10 54 H44 Q53 54 53 46 V16" fill="none" stroke="#666" strokeWidth={3} />
              <path d="M20 38 L24 27 L46 4 Q49 2 51 4 Q53 7 51 9 L30 33 Z" fill="#666" />
            </ActionSvg>
            <ActionLabel>发帖</ActionLabel>
          </Action>
          <Action>
            <ActionSvg viewBox="0 0 56 56">
              <rect x={3} y={3} width={21} height={22} rx={4} fill="none" stroke="#777" strokeWidth={3} />
              <path d="M41 2 L53 14 L41 26 L29 14 Z" fill="none" stroke="#777" strokeWidth={3} />
              <rect x={3} y={30} width={21} height={23} rx={4} fill="none" stroke="#777" strokeWidth={3} />
              <rect x={31} y={30} width={21} height={23} rx={4} fill="none" stroke="#777" strokeWidth={3} />
            </ActionSvg>
            <ActionLabel>功能</ActionLabel>
            <ActionDot />
          </Action>
          <Action $active>
            <ActionSvg viewBox="0 0 56 56">
              <circle cx={28} cy={28} r={26.5} fill="none" stroke={ORANGE} strokeWidth={3} />
              <path d="M15 28 H41 M28 15 V41" fill="none" stroke={ORANGE} strokeWidth={3} />
            </ActionSvg>
            <ActionLabel>加自选</ActionLabel>
          </Action>
        </Actions>
      </Footer>
    </Page>
  );
}
